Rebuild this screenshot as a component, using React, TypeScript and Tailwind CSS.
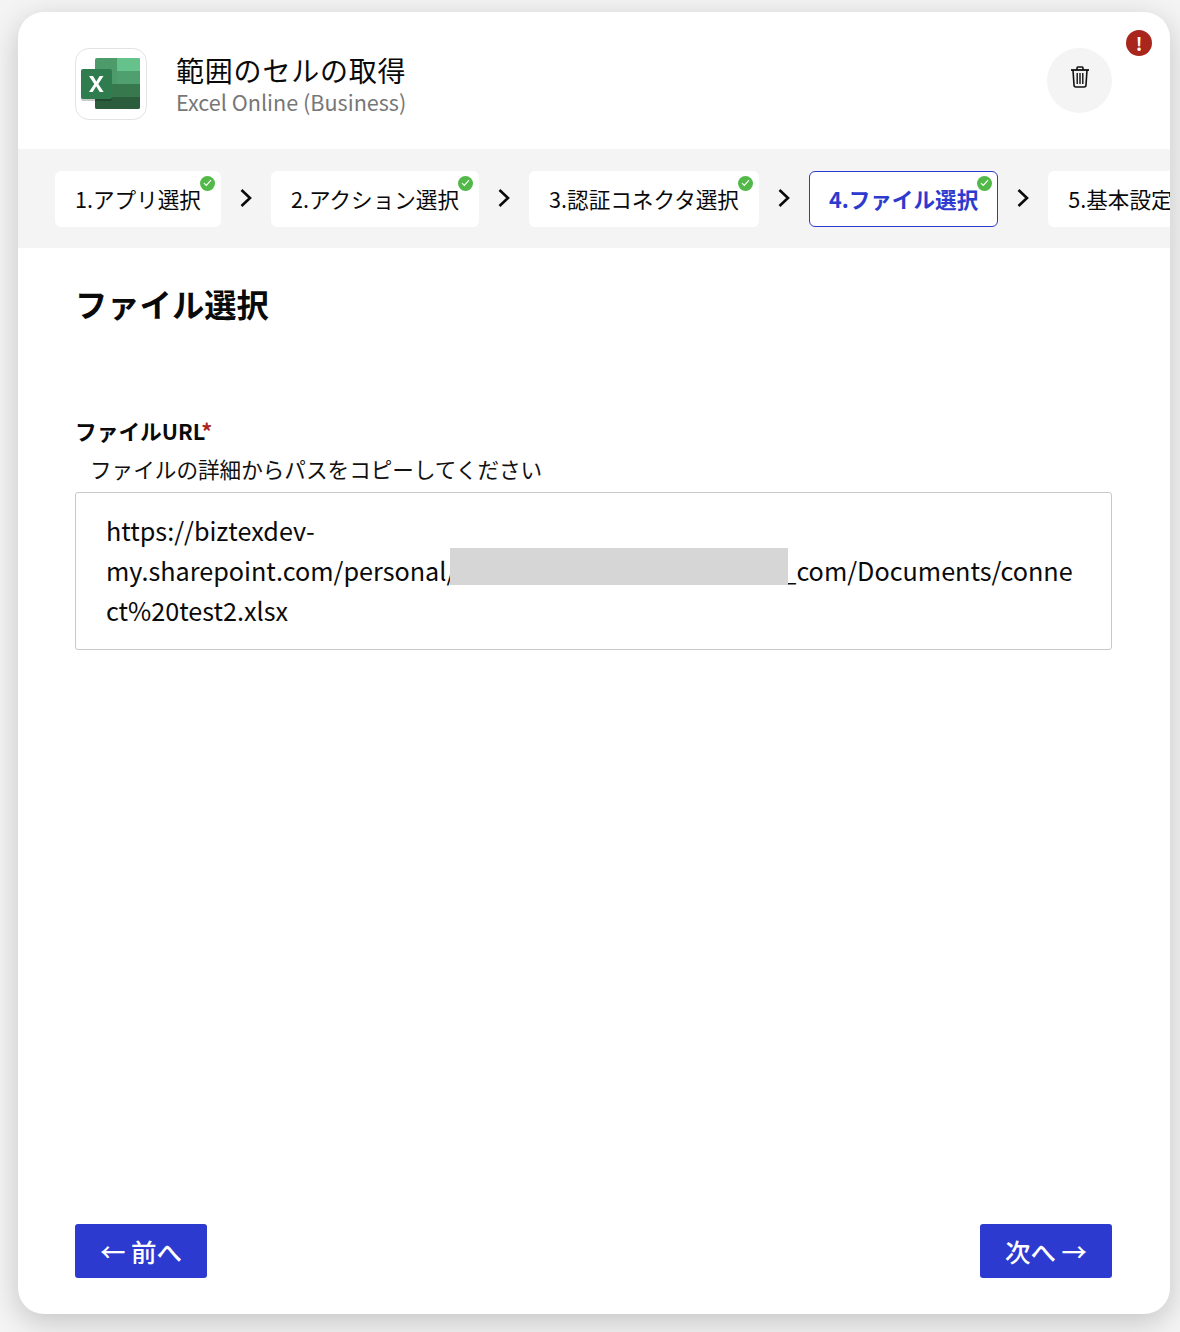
import React from 'react';

const font = '[font-family:"Noto_Sans_CJK_JP","Noto_Sans",sans-serif]';

const steps = [
  { label: '1.アプリ選択', done: true },
  { label: '2.アクション選択', done: true },
  { label: '3.認証コネクタ選択', done: true },
  { label: '4.ファイル選択', done: true, active: true },
  { label: '5.基本設定', done: false },
];

function ExcelLogo() {
  return (
    <svg width="60" height="52" viewBox="0 0 60 52">
      <rect x="14" y="0" width="45" height="51" rx="2" fill="#4d9a6a" />
      <path d="M36 0h21a2 2 0 0 1 2 2v11H36z" fill="#66c28b" />
      <rect x="36" y="13" width="23" height="13" fill="#4f9f6f" />
      <path d="M14 26h45v13H14z" fill="#37784c" />
      <path d="M14 39h45v10a2 2 0 0 1-2 2H16a2 2 0 0 1-2-2z" fill="#2b5c3c" />
      <rect x="0" y="12" width="31" height="31" rx="2" fill="#000" opacity="0.2" />
      <rect x="0" y="11" width="31" height="30" rx="2" fill="#2f7d4f" />
      <path d="M8 18h4l3.300 5.600L18.700 18h3.800l-5.200 8 5.400 8h-4l-3.500-5.800L11.700 34H8l5.300-8z" fill="#fff" />
    </svg>
  );
}

function TrashIcon() {
  return (
    <svg width="20" height="24" viewBox="0 0 20 24" fill="none" stroke="#111" strokeWidth="1.6">
      <path d="M1 5h18" strokeWidth="1.800" />
      <path d="M7 5V3a1 1 0 0 1 1-1h4a1 1 0 0 1 1 1v2" />
      <path d="M3 5l1 15a2 2 0 0 0 2 2h8a2 2 0 0 0 2-2l1-15" />
      <path d="M7.200 8v11M10 8v11M12.800 8v11" strokeWidth="1.400" />
    </svg>
  );
}

function DoneBadge({ active }: { active?: boolean }) {
  return (
    <span
      className={
        active
          ? 'absolute right-[5px] top-[4px] flex h-[15px] w-[15px] items-center justify-center rounded-full bg-[#52b948]'
          : 'absolute right-[6px] top-[5px] flex h-[15px] w-[15px] items-center justify-center rounded-full bg-[#52b948]'
      }
    >
      <svg width="9" height="8" viewBox="0 0 9 8" fill="none" stroke="#fff" strokeWidth="1.200">
        <path d="M1 4.200l2.300 2.300L8 1.200" />
      </svg>
    </span>
  );
}

function Chevron() {
  return (
    <svg width="14" height="20" viewBox="0 0 14 20" fill="none" stroke="#0a0a0a" strokeWidth="2.600" className="mx-[18px] mt-[-2px] shrink-0">
      <path d="M2.500 2l8.500 8-8.500 8" />
    </svg>
  );
}

function ArrowButton({ children }: { children: React.ReactNode }) {
  return (
    <button className="flex h-[54px] w-[132px] items-center justify-center rounded-[3px] bg-[#2d3acf] text-[25.5px] font-medium leading-none text-white">
      {children}
    </button>
  );
}

export default function App() {
  return (
    <div className={`h-[1332px] w-[1180px] overflow-hidden bg-[#f4f4f4] pb-[18px] pl-[18px] pr-[10px] pt-[12px] ${font}`}>
      <div className="relative flex h-[1302px] flex-col rounded-[26px] bg-white shadow-[0_8px_30px_rgba(0,0,0,0.2)]">
        {/* error mark */}
        <span className="absolute right-[18px] top-[18px] flex h-[26px] w-[26px] items-center justify-center rounded-full bg-[#a8261c] text-[18px] font-bold leading-none text-white">
          !
        </span>

        {/* Header */}
        <div className="flex h-[137px] shrink-0 items-start pl-[57px] pr-[58px] pt-[36px]">
          <div className="flex h-[72px] w-[72px] items-center justify-center rounded-[14px] border border-[#e3e3e3] pr-[1px]">
            <ExcelLogo />
          </div>
          <div className="ml-[29px] flex flex-col">
            <div className="mt-[5px] text-[28px] leading-[34px] tracking-[0.8px] text-[#0a0a0a]">範囲のセルの取得</div>
            <div className="mt-[1px] text-[21.6px] leading-[28px] text-[#777]">Excel Online (Business)</div>
          </div>
          <button className="ml-auto flex h-[65px] w-[65px] items-center justify-center rounded-full bg-[#f4f4f4] pb-[7px]">
            <TrashIcon />
          </button>
        </div>

        {/* Steps */}
        <div className="flex h-[99px] shrink-0 items-center overflow-hidden bg-[#f4f4f4] pl-[37px]">
          {steps.map((s, i) => (
            <React.Fragment key={s.label}>
              <div
                className={
                  s.active
                    ? 'relative flex h-[56px] shrink-0 items-center whitespace-nowrap rounded-[6px] border border-[#2d3acf] bg-white px-[19px] pt-[1px] text-[21.6px] font-bold text-[#2d3acf]'
                    : 'relative flex h-[56px] shrink-0 items-center whitespace-nowrap rounded-[6px] bg-white px-[20px] pt-[1px] text-[21.6px] text-[#0a0a0a]'
                }
              >
                {s.label}
                {s.done && <DoneBadge active={s.active} />}
              </div>
              {i < steps.length - 1 && <Chevron />}
            </React.Fragment>
          ))}
        </div>

        {/* Body */}
        <div className="flex flex-1 flex-col pl-[57px] pr-[58px]">
          <h1 className="mt-[32px] text-[32.3px] font-bold leading-[46px] text-[#0a0a0a]">ファイル選択</h1>
          <div className="mt-[89px] text-[21.7px] font-bold leading-[32px] text-[#0a0a0a]">
            ファイルURL<span className="text-[#a8261c]">*</span>
          </div>
          <div className="mt-[7px] pl-[15px] text-[21.6px] leading-[30px] text-[#111]">ファイルの詳細からパスをコピーしてください</div>
          <div className="mt-[8px] h-[158px] rounded-[3px] border border-[#c9c9c9] px-[30px] py-[17px] text-[25.2px] leading-[40px] text-[#0a0a0a]">
            <div>https://biztexdev-</div>
            <div className="flex whitespace-nowrap">
              <span>my.sharepoint.com/personal/</span>
              <span className="relative z-10 ml-[-6px] mt-[-2px] h-[37px] w-[338px] bg-[#d6d6d6]" />
              <span className="ml-[-6px]">_com/Documents/conne</span>
            </div>
            <div>ct%20test2.xlsx</div>
          </div>

          {/* Footer */}
          <div className="mt-auto flex justify-between pb-[36px]">
            <ArrowButton>← 前へ</ArrowButton>
            <ArrowButton>次へ →</ArrowButton>
          </div>
        </div>
      </div>
    </div>
  );
}
